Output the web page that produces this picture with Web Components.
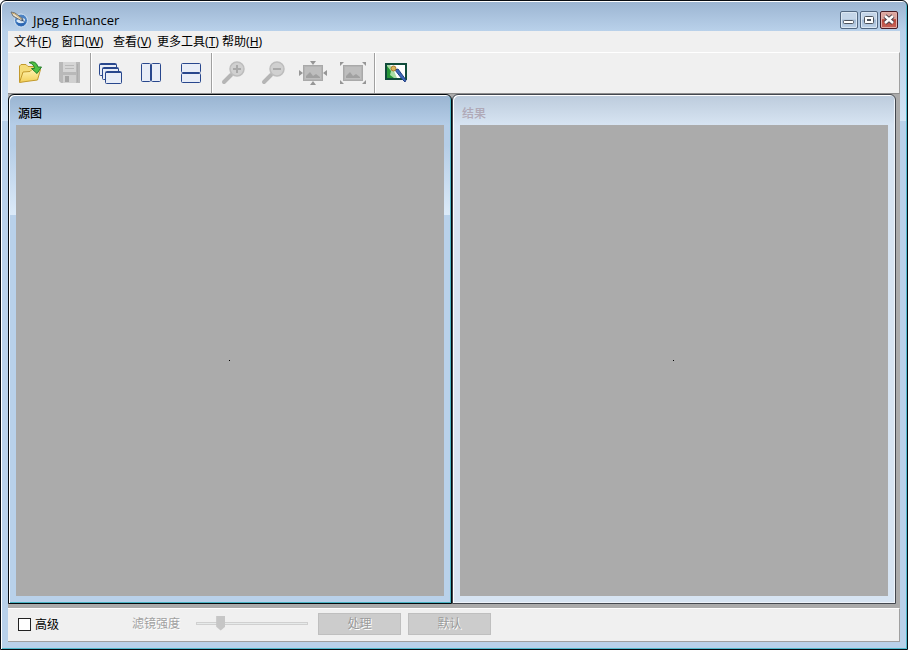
<!DOCTYPE html>
<html lang="zh-CN">
<head>
<meta charset="utf-8">
<title>Jpeg Enhancer</title>
<style>
  html, body { margin: 0; height: 100%; }
  body { background: #fff; color: #000; font: 12px/16px "Liberation Sans", "Noto Sans CJK SC", sans-serif; overflow: hidden; }
</style>
</head>
<body>
<app-window caption="Jpeg Enhancer">
  <menu-bar></menu-bar>
  <tool-bar></tool-bar>
  <mdi-area>
    <child-window caption="源图" active></child-window>
    <child-window caption="结果"></child-window>
  </mdi-area>
  <control-bar></control-bar>
</app-window>

<script>
class Base extends HTMLElement {
  connectedCallback() {
    if (this.shadowRoot) return;
    const t = document.createElement('template');
    t.innerHTML = '<style>*{box-sizing:border-box}button{font:inherit;color:inherit;margin:0}svg{display:block}' + this.css + '</style>' + this.html;
    this.attachShadow({ mode: 'open' }).append(t.content.cloneNode(true));
  }
}

customElements.define('app-window', class extends Base {
  get css() { return `
    :host{box-sizing:border-box;display:flex;flex-direction:column;height:100vh;border:1px solid #080c12;border-radius:6px 6px 0 0;
      padding:0 7px 7px;background:linear-gradient(#9bb4d1,#b9d1ea 30px,#d3e4f5 120px,#b9d1ea 120px);
      box-shadow:inset 1px 1px #fff,inset -1px -1px #4fb9cc}
    header{display:flex;align-items:center;height:30px;padding:7px 2px 0;gap:4px;flex:none}
    h1{flex:1;margin:0;font:13px/18px "Open Sans","Noto Sans",sans-serif}
    .buttons{display:flex;gap:2px}
    .buttons button{width:18px;height:18px;padding:0;border:1px solid #526781;border-radius:2px;background:linear-gradient(#c5d6e9 45%,#a1b8d2 50%,#bfd4ea);box-shadow:inset 0 0 0 1px #dbe7f3}
    .buttons .close{border-color:#481d26;background:linear-gradient(#dba49d 42%,#b9483b 48%,#c7645a);box-shadow:inset 0 0 0 1px #e2b0aa}
    main{flex:1;display:flex;flex-direction:column;min-height:0}`; }
  get html() { return `
    <header>
      <svg width="19" height="17" viewBox="0 0 19 17" aria-hidden="true">
        <circle cx="11" cy="9.500" r="6.500" fill="#4b82c3" stroke="#d4e4f3"/><path d="M6 10Q10 5 15 8Q15 13 10 13Q7 12 6 10" fill="#d7e8f8"/><path d="M6 10Q9 14 16 11Q14 16 10 15Q7 14 6 10Z" fill="#2b66b2"/>
        <path d="M1 1L3 5L12 10L13 8L5 2Z" fill="#ece3cf" stroke="#6b6f72"/><path d="M2 2L5 3L11 8" stroke="#c9a76a" fill="none"/><path d="M11 7L15 11L12 10Z" fill="#334d72"/>
      </svg>
      <h1>${this.getAttribute('caption')}</h1>
      <div class="buttons">
        <button aria-label="最小化"><svg width="16" height="16"><rect x="2.5" y="8.500" width="10" height="3" rx="1" fill="#fff" stroke="#4c535d"/></svg></button>
        <button aria-label="最大化"><svg width="16" height="16"><rect x="3.500" y="4.500" width="9" height="7" rx="1" fill="#fff" stroke="#4c535d"/><rect x="6.500" y="7.500" width="3" height="1" fill="#9eb6d0" stroke="#4c535d"/></svg></button>
        <button class="close" aria-label="关闭"><svg width="16" height="16"><path d="M4 4L12 11M12 4L4 11" stroke="#50424a" stroke-width="4.400"/><path d="M4 4L12 11M12 4L4 11" stroke="#fff" stroke-width="2.400"/></svg></button>
      </div>
    </header>
    <main><slot></slot></main>`; }
});

customElements.define('menu-bar', class extends Base {
  get css() { return `
    :host{display:block;flex:none;background:#f0f0f0}
    nav{display:grid;grid-template-columns:47px 52px 44px 65px 44px;height:21px;padding-left:6px}
    button{border:0;padding:0;background:none;text-align:left;white-space:nowrap;line-height:20px}
    span{font-family:"Noto Sans","Noto Sans CJK SC",sans-serif}`; }
  get html() {
    return '<nav>' + [['文件','F'],['窗口','W'],['查看','V'],['更多工具','T'],['帮助','H']]
      .map(([n, k]) => `<button>${n}<span>(<u>${k}</u>)</span></button>`).join('') + '</nav>';
  }
});

const icons = {
  open: `<defs><linearGradient id="f" x2="0" y2="1"><stop stop-color="#fff3b0"/><stop offset="1" stop-color="#f3cf57"/></linearGradient></defs><path d="M2.500 23V7L4 5.500H9L11 7.500H19L20.500 9V13" fill="#f5dc78" stroke="#c39a2c"/><path d="M2.500 23.500L6 13L13 12.500L15 10.500H23.500L20.500 21L9 22.500Z" fill="url(#f)" stroke="#c39a2c" stroke-linejoin="round"/><path d="M12 3.500Q19 1 21 8H24.500L20 14.500L14.500 9.500H17.500Q17 5 12 3.500Z" fill="#4fc144" stroke="#257f2c"/>`,
  save: `<path d="M2 3H23V24H4L2 22Z" fill="#b9b9b9"/><rect x="6" y="3" width="13" height="10" fill="#d6d6d6"/><path d="M8 6.500H17M8 9.500H17" stroke="#b9b9b9"/><path d="M6 16H19V24H6Z" fill="#d0d0d0"/><path d="M8 17H12V23H8Z" fill="#a5a5a5"/><path d="M20.500 5V23" stroke="#adadad"/>`,
  cascade: `<g fill="#e8edf7" stroke="#28478d"><rect x="1.500" y="4.500" width="17" height="12" rx="1"/><path d="M2 5.500H18"/><rect x="4.500" y="8.500" width="16" height="12" rx="1"/><path d="M5 9.500H20"/><rect x="7.500" y="12.500" width="16" height="12" rx="1"/><path d="M8 13.500H23"/></g>`,
  columns: `<g fill="#e8edf7" stroke="#28478d"><rect x="3.500" y="4.500" width="9" height="18" rx="1"/><rect x="13.500" y="4.500" width="9" height="18" rx="1"/></g>`,
  rows: `<g fill="#e8edf7" stroke="#28478d"><rect x="3.500" y="4.500" width="19" height="9" rx="1"/><rect x="3.500" y="14.500" width="19" height="9" rx="1"/></g>`,
  zoomin: `<path d="M4 23L11 16" stroke="#b5b5b5" stroke-width="4" stroke-linecap="round"/><circle cx="17" cy="10" r="7" fill="#d0d0d0" stroke="#bdbdbd" stroke-width="1.500"/><path d="M13 10H21M17 6V14" stroke="#a9a9a9" stroke-width="2"/>`,
  zoomout: `<path d="M4 23L11 16" stroke="#b5b5b5" stroke-width="4" stroke-linecap="round"/><circle cx="17" cy="10" r="7" fill="#d0d0d0" stroke="#bdbdbd" stroke-width="1.500"/><path d="M13 10H21" stroke="#a9a9a9" stroke-width="2"/>`,
  fit: `<rect x="3" y="6" width="20" height="16" fill="#a9a9a9"/><rect x="4.500" y="7.500" width="17" height="13" fill="#bebebe" stroke="#b4b4b4"/><path d="M6 19V17L10 13L13 17L16 15L20 18V19Z" fill="#a1a1a1"/><path d="M10 2H16L13 6ZM10 26L13 22L16 26ZM-1 11V17L3 14ZM27 11V17L23 14Z" fill="#969696"/>`,
  actual: `<rect x="3" y="6" width="20" height="16" fill="#a9a9a9"/><rect x="4.500" y="7.500" width="17" height="13" fill="#bebebe" stroke="#b4b4b4"/><path d="M6 19V17L10 13L13 17L16 15L20 18V19Z" fill="#a1a1a1"/><path d="M0 3H4L0 7ZM22 3H26V7ZM0 21L4 25H0ZM26 21V25H22Z" fill="#969696"/>`,
  wand: `<rect x="4" y="5" width="20" height="15" fill="#fff" stroke="#104b3b" stroke-width="2"/><path d="M5 6H8L12 12L15 19H5Z" fill="#a9dca5"/><path d="M5 7L9 12L8 16L12 19H5Z" fill="#269638"/><path d="M13 11L20 20L23 23L24 21L16 10Z" fill="#3c68b8" stroke="#223f84"/><circle cx="11.500" cy="9.500" r="2.500" fill="#d9b55a" stroke="#a8782f"/>`
};
customElements.define('tool-button', class extends Base {
  get css() { return `:host{display:block;width:40px}button{display:grid;place-items:center;width:100%;height:40px;border:0;padding:0 0 0 2px;background:none}svg{overflow:visible}`; }
  get html() { return `<button aria-label="${this.getAttribute('label')}" ${this.hasAttribute('off') ? 'disabled' : ''}><svg width="28" height="28">${icons[this.getAttribute('icon')]}</svg></button>`; }
});
customElements.define('tool-group', class extends Base {
  get css() { return `:host{box-sizing:border-box;display:flex;border-right:1px solid #a0a0a0;box-shadow:1px 0 #fff}:host(:nth-of-type(3)){padding:0 1px}:host(:last-of-type){border:0;box-shadow:none}:host(:first-of-type){padding-left:2px}`; }
  get html() { return '<slot></slot>'; }
});
customElements.define('tool-bar', class extends Base {
  get css() { return `:host{display:flex;flex:none;height:42px;box-sizing:border-box;background:#f0f0f0;border-top:1px solid #fff;border-right:1px solid #a0a0a0;border-bottom:1px solid #8e8e8e}`; }
  get html() { return `
    <tool-group><tool-button icon="open" label="打开"></tool-button><tool-button icon="save" label="保存" off></tool-button></tool-group>
    <tool-group><tool-button icon="cascade" label="层叠"></tool-button><tool-button icon="columns" label="垂直平铺"></tool-button><tool-button icon="rows" label="水平平铺"></tool-button></tool-group>
    <tool-group><tool-button icon="zoomin" label="放大" off></tool-button><tool-button icon="zoomout" label="缩小" off></tool-button><tool-button icon="fit" label="适合窗口" off></tool-button><tool-button icon="actual" label="实际大小" off></tool-button></tool-group>
    <tool-group><tool-button icon="wand" label="增强"></tool-button></tool-group>`; }
});

customElements.define('mdi-area', class extends Base {
  get css() { return `:host{flex:1;min-height:0;display:grid;grid-template-columns:1fr 1fr;box-sizing:border-box;padding:0 4px 4px 0;background:#ababab}`; }
  get html() { return '<slot></slot>'; }
});
customElements.define('child-window', class extends Base {
  get css() { return `
    :host{box-sizing:border-box;display:flex;flex-direction:column;min-width:0;border:1px solid #43474e;border-radius:6px 6px 0 0;padding:0 7px 7px;
      background:linear-gradient(#bccbdc,#d7e4f2 30px);box-shadow:inset 1px 1px #fff,inset -1px -1px #edf3fa}
    :host([active]){border-color:#04090d;background:linear-gradient(#99b4d1,#b5cde7 30px,#b5cde7 50px,#dceaf8 120px,#b9d1ea 120px);box-shadow:inset 1px 1px #fff,inset -1px -1px #48b3c2}
    h2{margin:0;height:30px;padding:10px 2px 0;font:inherit;font-weight:500;line-height:18px;color:#b0a9b7}
    :host([active]) h2{color:#000}
    .canvas{flex:1;display:grid;place-content:center;padding-right:1px;background:#ababab}
    .dot{width:1px;height:1px;background:#000}
    `; }
  get html() { return `<h2>${this.getAttribute('caption')}</h2><div class="canvas"><div class="dot"></div></div>`; }
});

customElements.define('control-bar', class extends Base {
  get css() { return `
    :host{display:flex;flex:none;align-items:flex-start;box-sizing:border-box;height:34px;padding:4px 10px 0;background:#f0f0f0;border-top:1px solid #fff;border-right:1px solid #a0a0a0;border-bottom:1px solid #a0a0a0}
    .check{display:flex;align-items:center;gap:4px;width:114px;height:24px;line-height:18px}
    .check input{margin-top:-1px}
    input{appearance:none;margin:0}
    [type=checkbox]{width:13px;height:13px;border:1px solid #222;background:#fff}
    .strength{width:64px;line-height:22px;color:#a0a0a0;text-shadow:1px 1px #fff}
    [type=range]{width:112px;height:20px;background:none}
    [type=range]::-webkit-slider-runnable-track{height:3px;background:#e7eaea;border:1px solid #d0d0d0}
    [type=range]::-webkit-slider-thumb{appearance:none;width:9px;height:15px;margin-top:-7px;background:#c6c6c6;clip-path:polygon(0 0,100% 0,100% 75%,50% 100%,0 75%)}
    button{width:83px;height:22px;padding:0;border:1px solid #bfbfbf;background:#ccc;color:#9b9b9b;text-shadow:1px 1px #fff;line-height:20px}
    .actions{display:flex;gap:7px;margin-left:10px}`; }
  get html() { return `
    <label class="check"><input type="checkbox"><span>高级</span></label>
    <label class="strength" for="s">滤镜强度</label>
    <input id="s" type="range" min="0" max="100" value="19" disabled>
    <div class="actions"><button disabled>处理</button><button disabled>默认</button></div>`; }
});
</script>
</body>
</html>
